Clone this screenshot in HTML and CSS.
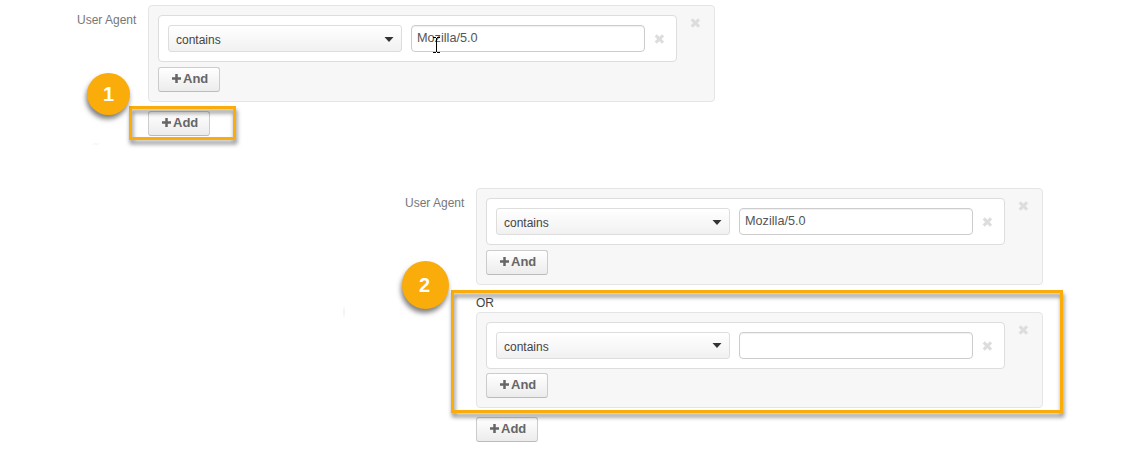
FILE: index.html
```html
<!DOCTYPE html>
<html lang="en">
<head>
<meta charset="utf-8">
<title>User Agent filter</title>
<link rel="stylesheet" href="styles.css">
</head>
<body>
<svg class="defs" width="0" height="0">
  <symbol id="close" viewBox="0 0 10 10"><path d="M1.7 1.3 9.1 8.7M9.1 1.3 1.7 8.7" fill="none" stroke="currentColor" stroke-width="3.1"/></symbol>
  <symbol id="plus" viewBox="0 0 9 9"><path d="M4.5 0v9M0 4.5h9" fill="none" stroke="currentColor" stroke-width="2.5"/></symbol>
  <symbol id="caret" viewBox="0 0 10 5"><path d="M.5 0h9L5 5z" fill="currentColor"/></symbol>
</svg>
<main class="canvas">
  <section class="filter filter-first">
    <div class="label">User Agent</div>
    <div class="conditions">
      <div class="group">
        <div class="group-main">
          <div class="rule">
            <div class="select"><span>contains</span><svg class="caret"><use href="#caret"/></svg></div>
            <div class="input">Mozilla/5.0</div>
            <svg class="close"><use href="#close"/></svg>
          </div>
          <button class="button"><svg class="plus"><use href="#plus"/></svg><span>And</span></button>
        </div>
        <svg class="close group-close"><use href="#close"/></svg>
      </div>
      <button class="button add"><svg class="plus"><use href="#plus"/></svg><span>Add</span></button>
    </div>
  </section>

  <section class="filter filter-second">
    <div class="label">User Agent</div>
    <div class="conditions">
      <div class="group">
        <div class="group-main">
          <div class="rule">
            <div class="select"><span>contains</span><svg class="caret"><use href="#caret"/></svg></div>
            <div class="input">Mozilla/5.0</div>
            <svg class="close"><use href="#close"/></svg>
          </div>
          <button class="button"><svg class="plus"><use href="#plus"/></svg><span>And</span></button>
        </div>
        <svg class="close group-close"><use href="#close"/></svg>
      </div>
      <div class="or">OR</div>
      <div class="group group-compact">
        <div class="group-main">
          <div class="rule">
            <div class="select"><span>contains</span><svg class="caret"><use href="#caret"/></svg></div>
            <div class="input"></div>
            <svg class="close"><use href="#close"/></svg>
          </div>
          <button class="button"><svg class="plus"><use href="#plus"/></svg><span>And</span></button>
        </div>
        <svg class="close group-close"><use href="#close"/></svg>
      </div>
      <button class="button add"><svg class="plus"><use href="#plus"/></svg><span>Add</span></button>
    </div>
  </section>

  <svg class="cursor" viewBox="0 0 7 16"><path d="M0 .5h3M4 .5h3M0 15.5h3M4 15.5h3M3.5 1v14" fill="none" stroke="#000"/></svg>
  <div class="frame frame-first"></div>
  <div class="frame frame-second"></div>
  <div class="badge badge-first">1</div>
  <div class="badge badge-second">2</div>
  <div class="smudge smudge-flat"></div>
  <div class="smudge smudge-tall"></div>
</main>
</body>
</html>
```
FILE: styles.css
```css
* { box-sizing: border-box; }
body {
  margin: 0;
  background: #fff;
  font: 12px/16px "Liberation Sans", Arial, sans-serif;
  color: #444;
}
svg { display: block; flex: none; }
.defs { position: absolute; }
.canvas {
  position: relative;
  width: 1141px;
  height: 452px;
  padding-top: 5px;
  overflow: hidden;
}
.filter { display: flex; align-items: flex-start; gap: 12px; }
.filter-first { padding-left: 77px; height: 183px; }
.filter-second { padding-left: 405px; }
.label { width: 59px; padding-top: 7px; color: #777; white-space: nowrap; }
.conditions { width: 567px; }
.group {
  display: flex;
  height: 97px;
  padding: 9px;
  background: #f7f7f7;
  border: 1px solid #e5e5e5;
  border-radius: 4px;
}
.group-main { display: flex; flex-direction: column; align-items: flex-start; gap: 5px; }
.group-compact { height: 96px; }
.group-compact .group-main { gap: 4px; }
.rule {
  display: flex;
  align-items: center;
  width: 519px;
  height: 47px;
  padding: 0 9px;
  background: #fff;
  border: 1px solid #ddd;
  border-radius: 4px;
}
.select {
  display: flex;
  align-items: center;
  justify-content: space-between;
  width: 234px;
  height: 27px;
  padding: 3px 7px 0;
  border: 1px solid #ddd;
  border-radius: 3px;
  background: linear-gradient(#fff, #f1f1f1);
}
.caret { width: 10px; height: 5px; margin-top: -2px; color: #333; }
.group-compact .caret { margin-top: -4px; }
.input {
  width: 234px;
  height: 27px;
  margin-left: 9px;
  padding: 4px 5px;
  border: 1px solid #ccc;
  border-radius: 4px;
  background: #fff;
  box-shadow: inset 0 1px 1px rgba(0,0,0,.06);
  color: #555;
  font-size: 12.7px;
}
.close { width: 10px; height: 10px; margin-left: 9px; color: #ddd; }
.group-close { margin: 3px 0 0 13px; }
.button {
  display: flex;
  align-items: flex-start;
  gap: 2px;
  width: 62px;
  height: 25px;
  margin: 0;
  padding: 3px 0 0 13px;
  border: 1px solid #ccc;
  border-bottom-color: #bbb;
  border-radius: 3px;
  background: linear-gradient(#fff, #ececec);
  color: #666;
  font: bold 13px/16px "Liberation Sans", Arial, sans-serif;
}
.plus { width: 9px; height: 9px; margin-top: 3px; }
.add { margin-top: 9px; }
.or { height: 27px; padding-top: 10px; }
.cursor { position: absolute; left: 433px; top: 37px; width: 7px; height: 16px; }
.frame {
  position: absolute;
  border: 3px solid #f9ac0a;
  filter: drop-shadow(1px 4px 2px rgba(0,0,0,.5));
}
.frame-first { left: 129px; top: 106px; width: 107px; height: 34px; }
.frame-second { left: 451px; top: 290px; width: 612px; height: 123px; }
.badge {
  position: absolute;
  display: flex;
  align-items: center;
  justify-content: center;
  border-radius: 50%;
  background: #f9ac0a;
  box-shadow: -1px 4px 5px rgba(0,0,0,.5);
  color: #fff;
  font: bold 20px/24px "Liberation Sans", Arial, sans-serif;
}
.badge-first { left: 87px; top: 73px; width: 43px; height: 42px; }
.badge-second { left: 402px; top: 261px; width: 47px; height: 48px; padding-right: 2px; }
.smudge { position: absolute; }
.smudge-flat { left: 91px; top: 143px; width: 10px; height: 2px; background: radial-gradient(closest-side, #eee, #fff); }
.smudge-tall { left: 343px; top: 305px; width: 2px; height: 14px; background: radial-gradient(closest-side, #e5e5e5, #fff); }
```
